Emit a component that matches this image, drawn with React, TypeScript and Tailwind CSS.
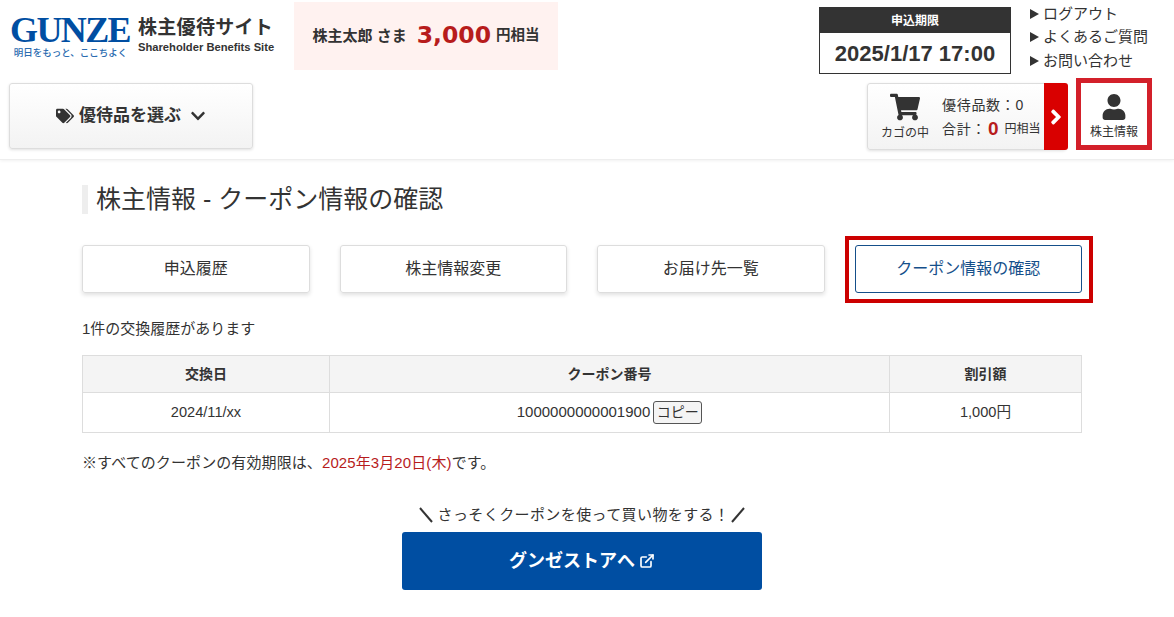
import React from "react";
import { ExternalLink } from "lucide-react";
import { FaAngleRight, FaChevronDown, FaShoppingCart, FaTags, FaUser } from "react-icons/fa";

const tabs = ["申込履歴", "株主情報変更", "お届け先一覧"];
const links = ["ログアウト", "よくあるご質問", "お問い合わせ"];

const App = () => {
  return (
    <div className="h-[617px] overflow-hidden bg-white text-[#333] font-['Liberation_Sans','Noto_Sans_CJK_JP',sans-serif]">
      <header className="h-[160px] border-b border-[#eee] shadow-[0_1px_3px_rgba(0,0,0,0.06)]">
        <div className="flex h-[78px] items-start">
          <div className="flex w-[294px] pl-[10px] pt-[15px]">
            <div className="w-[121px]">
              <div className="font-['Liberation_Serif',serif] text-[36px] leading-[30px] font-bold tracking-[-1.6px] whitespace-nowrap text-[#004ea2]">
                GUNZE
              </div>
              <div className="mt-[1px] text-center text-[9.5px] leading-[14px] font-medium whitespace-nowrap text-[#2b6cb0]">
                明日をもっと、ここちよく
              </div>
            </div>
            <div className="ml-[7px] whitespace-nowrap">
              <div className="mt-[1px] text-[19px] leading-[24px] font-bold tracking-[0.3px]">株主優待サイト</div>
              <div className="text-[11.2px] leading-[14px] font-bold">Shareholder Benefits Site</div>
            </div>
          </div>
          <div className="mt-[2px] flex h-[68px] w-[264px] items-center justify-center bg-[#fff2f0] whitespace-nowrap">
            <span className="text-[15px] font-bold">株主太郎 さま</span>
            <span className="ml-[10px] font-['DejaVu_Sans',sans-serif] text-[23.5px] font-bold text-[#b71c1c]">3,000</span>
            <span className="ml-[5px] text-[14.5px] font-bold">円相当</span>
          </div>
          <div className="mt-[7px] ml-auto w-[192px] border border-[#333]">
            <div className="flex h-[25px] items-center justify-center bg-[#333] text-[12px] font-bold text-white">申込期限</div>
            <div className="flex h-[40px] items-center justify-center text-[22px] font-bold">2025/1/17 17:00</div>
          </div>
          <ul className="ml-[19px] w-[144px] pt-[2px]">
            {links.map((link) => (
              <li key={link} className="flex h-[23.5px] items-center text-[15px] whitespace-nowrap">
                <span className="mr-[4px] h-0 w-0 border-y-[5px] border-l-[9px] border-y-transparent border-l-[#333]" />
                {link}
              </li>
            ))}
          </ul>
        </div>
        <div className="flex h-[72px] items-start pr-[22px] pl-[9px]">
          <button className="mt-[5px] flex h-[66px] w-[244px] items-center justify-center rounded-[3px] border border-[#ddd] bg-gradient-to-b from-white to-[#f3f3f3] text-[17px] font-bold shadow-[0_1px_3px_rgba(0,0,0,0.12)]">
            <FaTags className="mr-[5px] text-[18px]" />
            優待品を選ぶ
            <FaChevronDown className="ml-[9px] text-[16px]" />
          </button>
          <div className="mt-[5px] ml-auto flex h-[67px] w-[199px] rounded-[3px] border border-[#ddd] bg-gradient-to-b from-white to-[#f3f3f3] shadow-[0_1px_3px_rgba(0,0,0,0.12)]">
            <div className="flex w-[74px] shrink-0 flex-col items-center pt-[8px]">
              <FaShoppingCart className="text-[30px]" />
              <span className="mt-[2px] text-[12px] leading-[18px] whitespace-nowrap">カゴの中</span>
            </div>
            <div className="w-[102px] shrink-0 pt-[9px] text-[14px] leading-[24px] tracking-[0.7px] whitespace-nowrap">
              <div>優待品数：0</div>
              <div className="flex items-center">
                合計：
                <span className="mr-[5px] ml-[2px] text-[19px] font-bold text-[#b71c1c]">0</span>
                <span className="text-[12px] tracking-normal">円相当</span>
              </div>
            </div>
            <div className="my-[-1px] mr-[-1px] flex flex-1 items-center justify-center rounded-r-[3px] bg-[#d90000] text-[24px] text-white">
              <FaAngleRight />
            </div>
          </div>
          <div className="ml-[10px] flex h-[72px] w-[76px] flex-col items-center border-[5px] border-[#d3202a] pt-[11px]">
            <FaUser className="text-[26px]" />
            <span className="mt-[4px] text-[12px] leading-[16px] whitespace-nowrap">株主情報</span>
          </div>
        </div>
      </header>

      <main className="ml-[82px] w-[1000px]">
        <h1 className="mt-[25px] border-l-[6px] border-[#eee] pl-[8px] text-[25px] leading-[29px] font-normal">
          株主情報 - クーポン情報の確認
        </h1>
        <div className="mt-[31px] grid grid-cols-4 gap-[30px]">
          {tabs.map((tab) => (
            <div
              key={tab}
              className="flex h-[48px] items-center justify-center rounded-[3px] border border-[#ddd] text-[16px] shadow-[0_2px_4px_rgba(0,0,0,0.12)]"
            >
              {tab}
            </div>
          ))}
          <div className="relative flex h-[48px] items-center justify-center rounded-[3px] border border-[#154f8a] text-[16px] text-[#154f8a]">
            クーポン情報の確認
            <span className="absolute top-[-10px] right-[-12px] bottom-[-11px] left-[-11px] border-[4px] border-[#cc0000]" />
          </div>
        </div>
        <p className="mt-[26px] text-[15px] leading-[20px]">1件の交換履歴があります</p>
        <table className="mt-[16px] w-full table-fixed border-collapse text-[14.6px]">
          <thead>
            <tr className="h-[37px] bg-[#f4f4f4] text-[14px]">
              <th className="w-[247px] border border-[#ddd] font-bold">交換日</th>
              <th className="w-[560px] border border-[#ddd] font-bold">クーポン番号</th>
              <th className="border border-[#ddd] font-bold">割引額</th>
            </tr>
          </thead>
          <tbody>
            <tr className="h-[40px] text-center">
              <td className="border border-[#ddd]">2024/11/xx</td>
              <td className="border border-[#ddd] text-[15px]">
                1000000000001900
                <button className="ml-[3px] h-[23px] w-[49px] rounded-[3px] border border-[#555] bg-[#f4f4f4] text-[14px]">コピー</button>
              </td>
              <td className="border border-[#ddd]">1,000円</td>
            </tr>
          </tbody>
        </table>
        <p className="mt-[20px] text-[15px] leading-[20px] tracking-[0.1px]">
          ※すべてのクーポンの有効期限は、<span className="text-[#b71c1c]">2025年3月20日(木)</span>です。
        </p>
        <div className="mt-[32px] flex h-[20px] items-center justify-center text-[15px] tracking-[0.4px]">
          <svg width="14" height="16" viewBox="0 0 14 16" className="mr-[5px]">
            <path d="M1 1l12 14" stroke="#333" strokeWidth="2" />
          </svg>
          さっそくクーポンを使って買い物をする！
          <svg width="14" height="16" viewBox="0 0 14 16" className="ml-[2px]">
            <path d="M13 1L1 15" stroke="#333" strokeWidth="2" />
          </svg>
        </div>
        <a className="mx-auto mt-[7px] flex h-[58px] w-[360px] items-center justify-center rounded-[3px] bg-[#004ea2] text-[18px] font-bold text-white">
          グンゼストアへ
          <ExternalLink className="ml-[4px] h-[16px] w-[16px]" strokeWidth={2.5} />
        </a>
      </main>
    </div>
  );
};

export default App;
